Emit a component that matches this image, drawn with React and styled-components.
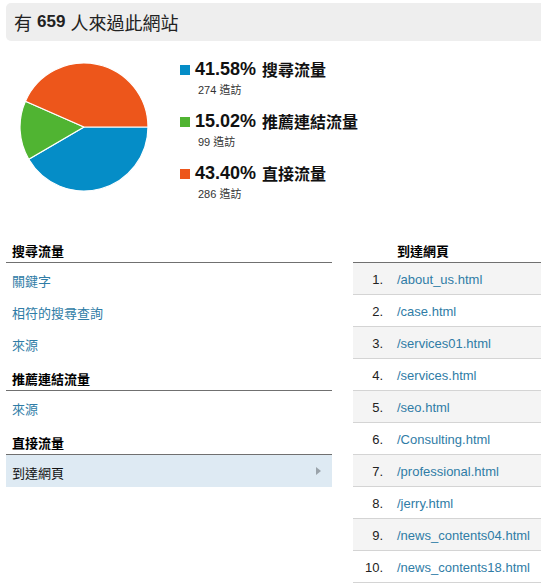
import React from "react";
import styled, { createGlobalStyle } from "styled-components";

const GlobalStyle = createGlobalStyle`
  html, body {
    margin: 0;
    padding: 0;
    background: #fff;
    overflow: hidden;
  }
  body {
    font-family: "Liberation Sans", Arial, "Noto Sans CJK TC", sans-serif;
    color: #222;
  }
`;

const Page = styled.div`
  width: 535px;
  padding: 3px 0 0 6px;
`;

const Header = styled.h1`
  margin: 0;
  height: 38px;
  padding-left: 8px;
  display: flex;
  align-items: center;
  background: #eeeeee;
  border-radius: 5px 0 0 5px;
  font-size: 18px;
  font-weight: normal;
  color: #222;
  white-space: pre;

  b {
    font-size: 17px;
  }
`;

const Overview = styled.section`
  display: flex;
  align-items: flex-start;
`;

const Pie = styled.svg`
  display: block;
  margin: 21px 0 0 13px;
  flex: none;
`;

const Legend = styled.ul`
  list-style: none;
  margin: 17px 0 0 31px;
  padding: 0;
  display: flex;
  flex-direction: column;
  gap: 10px;
`;

const LegendItem = styled.li`
  display: flex;
  flex-direction: column;
`;

const LegendTitle = styled.div`
  display: flex;
  align-items: center;
  height: 22px;
  font-weight: bold;
  color: #111;
`;

const Swatch = styled.span`
  width: 10px;
  height: 10px;
  margin: 1px 5px 0 0;
  background: ${(props) => props.color};
`;

const Percent = styled.span`
  font-size: 18px;
  margin-right: 6px;
`;

const LegendLabel = styled.span`
  font-size: 16px;
`;

const Count = styled.div`
  height: 20px;
  line-height: 20px;
  padding-left: 18px;
  font-size: 11px;
  color: #333;
`;

const Lower = styled.div`
  display: flex;
  margin-top: 27px;
  gap: 21px;
`;

const LeftColumn = styled.div`
  width: 326px;
  flex: none;
`;

const RightColumn = styled.div`
  flex: 1;
`;

const SectionHead = styled.h3`
  margin: 0;
  display: flex;
  align-items: flex-end;
  padding: 0 0 1px ${(props) => props.indent || "6px"};
  box-sizing: border-box;
  border-bottom: 1px solid #707070;
  height: 32px;
  line-height: 18px;
  font-size: 13px;
  font-weight: bold;
  color: #000;
`;

const NavRow = styled.a`
  display: flex;
  align-items: center;
  justify-content: space-between;
  height: 32px;
  padding: 2px 11px 0 6px;
  box-sizing: border-box;
  font-size: 13px;
  text-decoration: none;
  color: ${(props) => (props.active ? "#111" : "#2f7ca6")};
  background: ${(props) => (props.active ? "#deeaf3" : "transparent")};
`;

const Arrow = styled.span`
  width: 0;
  height: 0;
  border-top: 4px solid transparent;
  border-bottom: 4px solid transparent;
  border-left: 5px solid #9aa3aa;
  margin-top: -3px;
`;

const PageList = styled.ol`
  list-style: none;
  margin: 0;
  padding: 0;
`;

const PageRow = styled.li`
  display: flex;
  align-items: center;
  height: 32px;
  padding-top: 1px;
  box-sizing: border-box;
  border-bottom: 1px solid #d4d4d4;
  background: ${(props) => (props.odd ? "#f4f4f4" : "#fff")};
  font-size: 13px;
`;

const RowNum = styled.span`
  width: 30px;
  text-align: right;
  color: #222;
  margin-right: 14px;
`;

const PageLink = styled.a`
  color: #2f7ca6;
  text-decoration: none;
`;

const legend = [
  { color: "#058dc7", pct: "41.58%", label: "搜尋流量", count: "274" },
  { color: "#50b432", pct: "15.02%", label: "推薦連結流量", count: "99" },
  { color: "#ed561b", pct: "43.40%", label: "直接流量", count: "286" },
];

const pages = [
  "/about_us.html",
  "/case.html",
  "/services01.html",
  "/services.html",
  "/seo.html",
  "/Consulting.html",
  "/professional.html",
  "/jerry.html",
  "/news_contents04.html",
  "/news_contents18.html",
];

function TrafficPie() {
  return (
    <Pie width="130" height="130" viewBox="0 0 130 130">
      <g stroke="#fff" strokeWidth="1.2" strokeLinejoin="round">
        <path d="M65 65 L129 65 A64 64 0 0 1 9.75 97.3 Z" fill="#058dc7" />
        <path d="M65 65 L9.75 97.3 A64 64 0 0 1 6.42 39.21 Z" fill="#50b432" />
        <path d="M65 65 L6.42 39.21 A64 64 0 0 1 129 65 Z" fill="#ed561b" />
      </g>
    </Pie>
  );
}

export default function App() {
  return (
    <Page>
      <GlobalStyle />
      <Header>
        有 <b>659</b> 人來過此網站
      </Header>

      <Overview>
        <TrafficPie />
        <Legend>
          {legend.map((item) => (
            <LegendItem key={item.pct}>
              <LegendTitle>
                <Swatch color={item.color} />
                <Percent>{item.pct}</Percent>
                <LegendLabel>{item.label}</LegendLabel>
              </LegendTitle>
              <Count>{item.count} 造訪</Count>
            </LegendItem>
          ))}
        </Legend>
      </Overview>

      <Lower>
        <LeftColumn>
          <SectionHead>搜尋流量</SectionHead>
          <NavRow href="#">關鍵字</NavRow>
          <NavRow href="#">相符的搜尋查詢</NavRow>
          <NavRow href="#">來源</NavRow>
          <SectionHead>推薦連結流量</SectionHead>
          <NavRow href="#">來源</NavRow>
          <SectionHead>直接流量</SectionHead>
          <NavRow href="#" active>
            到達網頁
            <Arrow />
          </NavRow>
        </LeftColumn>

        <RightColumn>
          <SectionHead indent="44px">到達網頁</SectionHead>
          <PageList>
            {pages.map((p, i) => (
              <PageRow key={p} odd={i % 2 === 0}>
                <RowNum>{i + 1}.</RowNum>
                <PageLink href="#">{p}</PageLink>
              </PageRow>
            ))}
          </PageList>
        </RightColumn>
      </Lower>
    </Page>
  );
}
